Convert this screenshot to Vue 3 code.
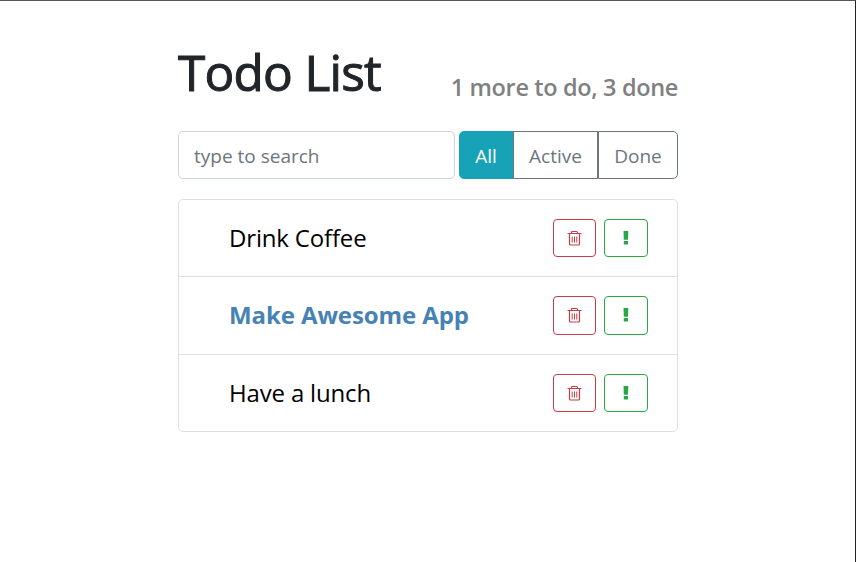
<script setup>
import { ref } from 'vue'

const filters = ['All', 'Active', 'Done']
const active = ref('All')
const term = ref('')
const todos = ref([
  { id: 1, label: 'Drink Coffee', important: false },
  { id: 2, label: 'Make Awesome App', important: true },
  { id: 3, label: 'Have a lunch', important: false },
])
</script>

<template>
  <div class="page">
    <main class="todo-app">
      <header class="app-header">
        <h1>Todo List</h1>
        <h2>1 more to do, 3 done</h2>
      </header>
      <div class="top-panel">
        <input v-model="term" class="search" type="text" placeholder="type to search" />
        <div class="filters">
          <button
            v-for="f in filters"
            :key="f"
            type="button"
            :class="['filter', f.toLowerCase(), { selected: f === active }]"
            @click="active = f"
          >{{ f }}</button>
        </div>
      </div>
      <ul class="todo-list">
        <li v-for="t in todos" :key="t.id" :class="['item', { important: t.important }]">
          <span class="label">{{ t.label }}</span>
          <button type="button" class="action danger" @click="todos = todos.filter((x) => x.id !== t.id)">
            <svg width="15" height="18" viewBox="0 0 15 18" fill="none" stroke="currentColor">
              <path d="M0.5 4.5H14.5M4.5 4.3V3.4Q4.5 2.5 5.5 2.5H9.5Q10.5 2.5 10.5 3.4V4.3M2.5 4.5V15Q2.5 16 3.5 16H11.5Q12.5 16 12.5 15V4.5" stroke-width="1.2" />
              <path d="M5.2 7.5V13.5M7.5 7.5V13.5M9.8 7.5V13.5" stroke-width="1" />
            </svg>
          </button>
          <button type="button" class="action success" @click="t.important = !t.important">
            <svg width="8" height="18" viewBox="0 0 8 18" fill="currentColor">
              <path d="M1.5 2H6.3L6 10.8H1.8ZM1.8 12.1H6V15.6H1.8Z" />
            </svg>
          </button>
        </li>
      </ul>
    </main>
  </div>
</template>

<style>
body {
  background: #fff;
}
</style>

<style scoped>
.page {
  box-sizing: border-box;
  height: 562px;
  border-top: 1px solid #555;
  border-right: 1px solid #222;
  padding: 39px 0 0 178px;
  font-family: "Open Sans", "Noto Sans", sans-serif;
  color: #212529;
}
.todo-app {
  width: 500px;
}
.app-header {
  display: flex;
  justify-content: space-between;
  height: 91px;
}
h1,
h2 {
  margin: 0;
  white-space: nowrap;
}
h1 {
  font-size: 49.5px;
  line-height: 65px;
  font-weight: 400;
  letter-spacing: -0.8px;
  word-spacing: 0.5px;
  -webkit-text-stroke: 1px currentColor;
}
h2 {
  padding-top: 31px;
  font-size: 23.5px;
  line-height: 32px;
  font-weight: 600;
  color: gray;
  letter-spacing: -0.35px;
}
.top-panel {
  display: flex;
  gap: 4px;
  height: 48px;
}
.search {
  box-sizing: border-box;
  width: 277px;
  padding: 2px 15px 0 15px;
  border: 1px solid #ced4da;
  border-radius: 5px;
  outline: none;
  font: 19px/28px "Open Sans", "Noto Sans", sans-serif;
  color: #495057;
}
.search::placeholder {
  color: #6c757d;
  opacity: 1;
}
.filters {
  display: flex;
  width: 219px;
}
.filter {
  box-sizing: border-box;
  padding: 1px 0 0;
  border: 1px solid #6c757d;
  background: #fff;
  color: #6c757d;
  font: 19px/28px "Open Sans", "Noto Sans", sans-serif;
}
.filter.all {
  width: 55px;
  padding-right: 1px;
  border-radius: 5px 0 0 5px;
}
.filter.active {
  width: 85px;
  margin-left: -1px;
}
.filter.done {
  width: 80px;
  border-radius: 0 5px 5px 0;
}
.filter.selected {
  background: #17a2b8;
  border-color: #17a2b8;
  color: #fff;
}
.todo-list {
  box-sizing: border-box;
  list-style: none;
  margin: 20px 0 0;
  padding: 0;
  border: 1px solid #dfdfdf;
  border-radius: 5px;
}
.item {
  box-sizing: border-box;
  display: flex;
  align-items: center;
  height: 77px;
  padding: 0 29px 0 50px;
  border-bottom: 1px solid #dfdfdf;
}
.item:nth-child(2) {
  height: 78px;
}
.item:last-child {
  height: 76px;
  border-bottom: 0;
}
.label {
  flex: 1;
  font-size: 24px;
  line-height: 34px;
  letter-spacing: -0.17px;
  color: #000;
  white-space: nowrap;
}
.important .label {
  padding-bottom: 2px;
  font-weight: 700;
  letter-spacing: -0.1px;
  color: #4682b4;
}
.action {
  box-sizing: border-box;
  display: flex;
  align-items: center;
  justify-content: center;
  width: 43px;
  height: 38px;
  padding: 0;
  border: 1px solid currentColor;
  border-radius: 4px;
  background: none;
}
.important .action {
  height: 39px;
}
.important .action svg {
  margin-bottom: 1px;
}
.danger {
  color: #c43d4b;
}
.success {
  width: 44px;
  margin-left: 8px;
  color: #28a745;
}
</style>
